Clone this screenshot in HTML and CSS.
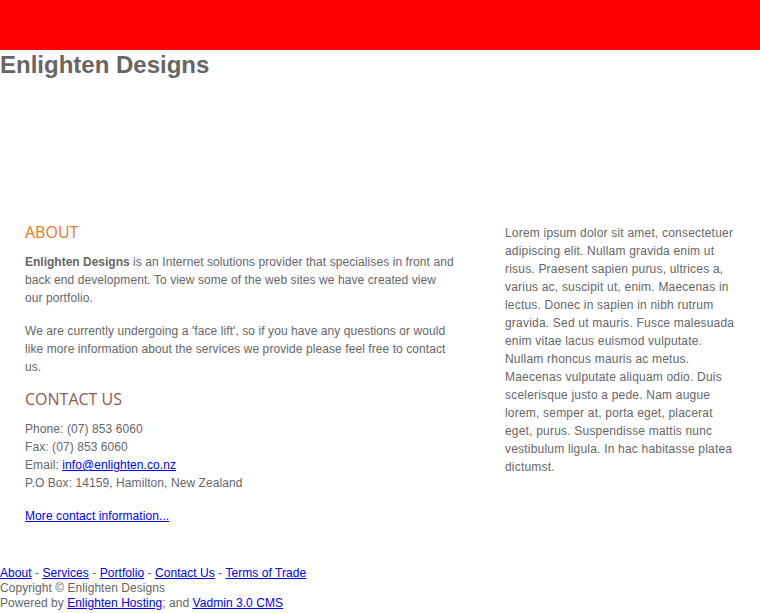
FILE: index.html
```html
<!DOCTYPE html>
<html>
<head>
<meta charset="utf-8">
<title>Enlighten Designs</title>
<link rel="stylesheet" href="styles.css">
</head>
<body>
<div class="topbar"></div>
<h1 class="logo">Enlighten Designs</h1>
<div class="banner"></div>
<div class="main">
  <div class="content">
    <h2 class="heading about">ABOUT</h2>
    <p><strong>Enlighten Designs</strong> is an Internet solutions provider that specialises in front and back end development. To view some of the web sites we have created view our portfolio.</p>
    <p>We are currently undergoing a 'face lift', so if you have any questions or would like more information about the services we provide please feel free to contact us.</p>
    <h2 class="heading contact">CONTACT US</h2>
    <p>Phone: (07) 853 6060<br>Fax: (07) 853 6060<br>Email: <a href="#">info@enlighten.co.nz</a><br>P.O Box: 14159, Hamilton, New Zealand</p>
    <p><a href="#">More contact information...</a></p>
  </div>
  <div class="sidebar">
    <p>Lorem ipsum dolor sit amet, consectetuer adipiscing elit. Nullam gravida enim ut risus. Praesent sapien purus, ultrices a, varius ac, suscipit ut, enim. Maecenas in lectus. Donec in sapien in nibh rutrum gravida. Sed ut mauris. Fusce malesuada enim vitae lacus euismod vulputate. Nullam rhoncus mauris ac metus. Maecenas vulputate aliquam odio. Duis scelerisque justo a pede. Nam augue lorem, semper at, porta eget, placerat eget, purus. Suspendisse mattis nunc vestibulum ligula. In hac habitasse platea dictumst.</p>
  </div>
</div>
<div class="footer">
  <div><a href="#">About</a> - <a href="#">Services</a> - <a href="#">Portfolio</a> - <a href="#">Contact Us</a> - <a href="#">Terms of Trade</a></div>
  <div>Copyright © Enlighten Designs</div>
  <div>Powered by <a href="#">Enlighten Hosting</a>; and <a href="#">Vadmin 3.0 CMS</a></div>
</div>
</body>
</html>
```
FILE: styles.css
```css
html, body {
  margin: 0;
  padding: 0;
  background: #fff;
}
body {
  font-family: "Liberation Sans", Arial, sans-serif;
  color: #666;
}
a {
  color: #0000ee;
}
.topbar {
  height: 50px;
  background: #ff0000;
}
.logo {
  margin: 0;
  font-size: 24px;
  line-height: 30px;
  font-weight: bold;
  color: #666;
}
.banner {
  height: 144px;
}
.main {
  display: flex;
  padding-left: 25px;
  font-size: 12px;
  line-height: 18px;
}
.content {
  flex: 0 0 430px;
  letter-spacing: 0.08px;
}
.content strong {
  letter-spacing: 0;
}
.sidebar {
  flex: 0 0 236px;
  margin-left: 50px;
  letter-spacing: 0.2px;
}
.heading {
  font-family: "Open Sans", sans-serif;
  font-weight: 400;
  font-size: 16px;
  letter-spacing: 0;
  line-height: 16px;
  margin: 0 0 13px;
}
.about { color: #e87722; }
.contact { color: #8c5a55; }
.main p {
  margin: 0 0 15px;
}
.footer {
  margin-top: 26px;
  font-size: 12px;
  line-height: 15px;
  letter-spacing: 0.05px;
}
```
